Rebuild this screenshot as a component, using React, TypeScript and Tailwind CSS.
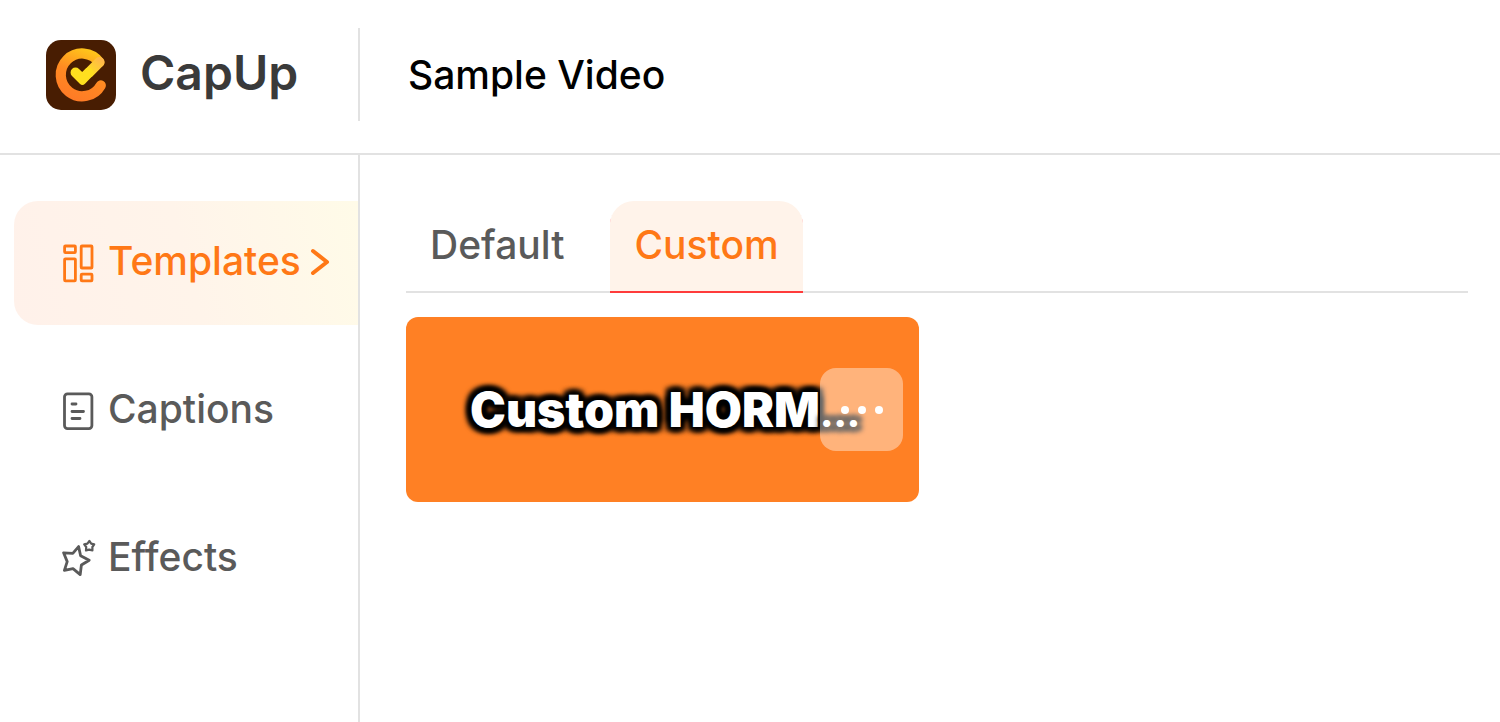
import { useState } from 'react';
import { clsx } from 'clsx';

type Section = 'templates' | 'captions' | 'effects';
type Tab = 'default' | 'custom';

const TemplatesIcon = () => (
  <svg width="32" height="40" viewBox="0 0 32 40" fill="none" stroke="currentColor" strokeWidth="2.8" strokeLinejoin="round" aria-hidden="true">
    <rect x="2.6" y="3" width="10.8" height="6.6" rx="0.8" />
    <rect x="2.6" y="15.8" width="10.8" height="22" rx="0.8" />
    <rect x="19.2" y="3" width="10.8" height="22" rx="0.8" />
    <rect x="19.2" y="31.2" width="10.8" height="6.6" rx="0.8" />
  </svg>
);

const CaptionsIcon = () => (
  <svg width="32" height="40" viewBox="0 0 32 40" fill="none" stroke="currentColor" strokeWidth="2.8" strokeLinecap="round" aria-hidden="true">
    <rect x="2.5" y="2.8" width="27.4" height="34.8" rx="3" />
    <path d="M10 13h4M10 20.5h11.5M10 27.5h8" />
  </svg>
);

const EffectsIcon = () => (
  <svg width="34" height="40" viewBox="0 0 34 40" fill="none" stroke="currentColor" strokeWidth="2.8" strokeLinejoin="round" aria-hidden="true">
    <path d="M16.6 7.6L18.6 16.8L27.2 21.2L19.4 26L18.2 35.6L11 29.6L2.4 31.4L5.2 22.6L1.6 13.8L10.8 14.4Z" />
    <path d="M27.4 2L29.2 4.6L32.2 5.4L30.4 8L30.4 11.4L27.2 10.6L24 11.4L24.2 8L22.2 5.4L25.4 4.6Z" strokeWidth="2.2" />
  </svg>
);

const Logo = () => (
  <svg width="70" height="70" viewBox="0 0 70 70" fill="none" aria-hidden="true">
    <defs>
      <linearGradient id="ring" x1="46" y1="10" x2="26" y2="60" gradientUnits="userSpaceOnUse">
        <stop offset="0" stopColor="#ffc81a" />
        <stop offset="0.5" stopColor="#ff8a22" />
        <stop offset="1" stopColor="#ff7a26" />
      </linearGradient>
      <linearGradient id="arm" x1="55" y1="20" x2="43" y2="33" gradientUnits="userSpaceOnUse">
        <stop offset="0" stopColor="#ffb84a" />
        <stop offset="1" stopColor="#ffdf1f" />
      </linearGradient>
    </defs>
    <rect width="70" height="70" rx="15" fill="#481d02" />
    <path d="M53.4 22.2A21.4 21.4 0 1 0 54.8 45.4" stroke="url(#ring)" strokeWidth="10.2" strokeLinecap="round" />
    <path d="M53.4 22.2L43 32.6" stroke="url(#arm)" strokeWidth="10.2" strokeLinecap="round" />
    <path d="M36.2 32L39 29.2A5 5 0 0 1 46 36.6L39 43.8Q36.4 46.2 33.8 43.8L26 36A4.8 4.8 0 0 1 33 29Z" fill="#ffdf1f" />
  </svg>
);

const NAV_ITEMS: { id: Section; label: string; icon: React.ReactNode }[] = [
  { id: 'templates', label: 'Templates', icon: <TemplatesIcon /> },
  { id: 'captions', label: 'Captions', icon: <CaptionsIcon /> },
  { id: 'effects', label: 'Effects', icon: <EffectsIcon /> },
];

const TABS: { id: Tab; label: string }[] = [
  { id: 'default', label: 'Default' },
  { id: 'custom', label: 'Custom' },
];

export default function App() {
  const [section, setSection] = useState<Section>('templates');
  const [tab, setTab] = useState<Tab>('custom');

  return (
    <div className="min-h-screen bg-white flex flex-col font-[Inter,sans-serif] font-medium text-[39px] leading-12 text-[#5a5a5a]">
      {/* Header */}
      <header className="flex items-center border-b-2 border-[#e2e2e2] pt-7 pb-8">
        <div className="w-[360px] h-[93px] shrink-0 border-r-2 border-[#e2e2e2] flex items-center gap-6 pl-[46px]">
          <Logo />
          <span className="pb-1 text-5xl font-semibold text-[#3a3a3a]">CapUp</span>
        </div>
        <h1 className="pl-12 text-black">Sample Video</h1>
      </header>

      <div className="flex-1 flex">
        {/* Sidebar */}
        <nav className="w-[360px] shrink-0 border-r-2 border-[#e2e2e2] pl-3.5 pt-[46px] flex flex-col gap-6">
          {NAV_ITEMS.map((item) => {
            const active = section === item.id;
            return (
              <button
                key={item.id}
                type="button"
                onClick={() => setSection(item.id)}
                className={clsx(
                  'h-31 pl-12 flex items-center rounded-l-3xl cursor-pointer',
                  active && 'bg-linear-[75deg] from-[#fff1ea] via-[#fff4ea] to-[#fffbe8] text-[#ff7816]'
                )}
              >
                <span className="w-8 shrink-0">{item.icon}</span>
                <span className="pl-3.5 pb-1">{item.label}</span>
                {active && (
                  <svg width="24" height="34" viewBox="0 0 24 34" fill="none" stroke="currentColor" strokeWidth="4" strokeLinecap="round" strokeLinejoin="round" className="ml-1.5 shrink-0" aria-hidden="true">
                    <path d="M6 5L20 16L6 27" />
                  </svg>
                )}
              </button>
            );
          })}
        </nav>

        {/* Content */}
        <main className="flex-1 min-w-0 pl-[46px] pr-8 pt-[46px]">
          <div role="tablist" className="flex gap-[22px] shadow-[inset_0_-2px_0_#e2e2e2]">
            {TABS.map((t) => (
              <button
                key={t.id}
                type="button"
                role="tab"
                aria-selected={tab === t.id}
                onClick={() => setTab(t.id)}
                className={clsx(
                  'px-6 pt-5 pb-6 cursor-pointer',
                  tab === t.id && 'rounded-t-3xl bg-[#fff3ea] text-[#ff7816] shadow-[inset_0_-2px_0_#ff3b3b]'
                )}
              >
                {t.label}
              </button>
            ))}
          </div>

          <div className="relative mt-6 w-[513px] h-[185px] rounded-xl bg-[#ff8024] flex items-center px-16">
            <span className="whitespace-nowrap text-5xl font-black text-white [text-shadow:-5px_-4px_5px_#000,5px_-4px_5px_#000,-5px_4px_5px_#000,5px_4px_5px_#000,0_-5px_5px_#000,0_5px_5px_#000,0_0_8px_#000]">
              Custom HORM<span className="text-4xl">...</span>
            </span>
            <button
              type="button"
              aria-label="More options"
              className="absolute right-4 top-[51px] size-[83px] rounded-2xl bg-white/40 flex items-center justify-center cursor-pointer"
            >
              <svg width="44" height="10" viewBox="0 0 44 10" fill="#fff" aria-hidden="true">
                <circle cx="5" cy="5" r="4" />
                <circle cx="22" cy="5" r="4" />
                <circle cx="39" cy="5" r="4" />
              </svg>
            </button>
          </div>
        </main>
      </div>
    </div>
  );
}
